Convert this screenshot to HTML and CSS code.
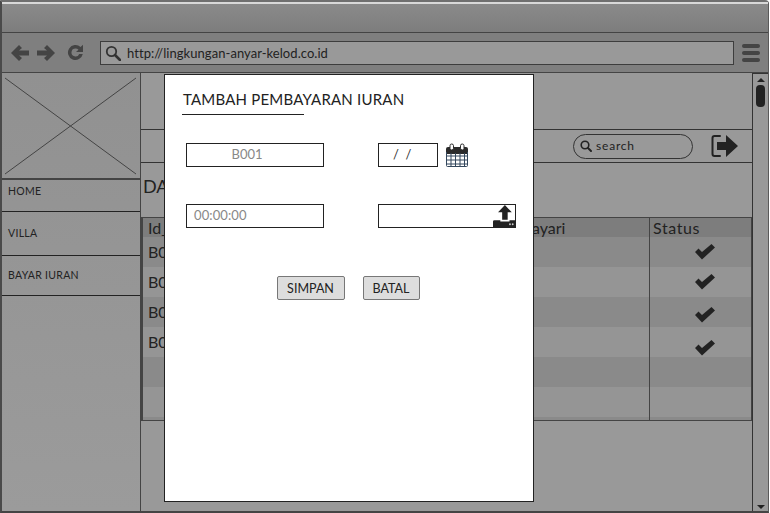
FILE: index.html
```html
<!DOCTYPE html>
<html lang="id">
<head>
    <meta charset="UTF-8">
    <meta name="viewport" content="width=device-width, initial-scale=1.0">
    <title>Tambah Pembayaran Iuran</title>
    <link rel="stylesheet" href="styles.css">
</head>
<body>

    <div class="window">
        <div class="titlebar"></div>

        <div class="toolbar">
            <svg class="nav-icon" width="18" height="16" viewBox="0 0 18 16"><path d="M8 0 0 8l8 8 3-3-3-2.500h10v-5H8l3-2.500z"/></svg>
            <svg class="nav-icon nav-forward" width="18" height="16" viewBox="0 0 18 16"><path d="M10 0l8 8-8 8-3-3 3-2.500H0v-5h10L7 3z"/></svg>
            <svg class="nav-icon reload" width="17" height="17" viewBox="0 0 17 17"><path d="M8.500 4.500a4 4 0 1 0 3.700 5.500h3.600A7.500 7.500 0 1 1 13.600 3L16 .7V8H9l2.500-2.300a4 4 0 0 0-3-1.200z"/></svg>
            <div class="url-box">
                <svg width="16" height="16" viewBox="0 0 16 16"><circle cx="6.500" cy="6.500" r="4.700" fill="none" stroke="#333" stroke-width="1.800"/><path d="M10 10l5 5" stroke="#333" stroke-width="2.600" stroke-linecap="round"/></svg>
                <span>http://lingkungan-anyar-kelod.co.id</span>
            </div>
            <div class="burger"><i></i><i></i><i></i></div>
        </div>

        <div class="main">
            <aside class="sidebar">
                <svg class="logo" viewBox="0 0 138 104" preserveAspectRatio="none"><path d="M3 4 134 100M134 4 3 100" stroke="#444" fill="none"/></svg>
                <nav>
                    <a class="nav-home">HOME</a>
                    <a class="nav-villa">VILLA</a>
                    <a class="nav-bayar">BAYAR IURAN</a>
                </nav>
            </aside>

            <section class="content">
                <div class="banner"></div>
                <div class="topbar">
                    <div class="search">
                        <svg width="12" height="12" viewBox="0 0 12 12"><circle cx="5" cy="5" r="3.800" fill="none" stroke="#222" stroke-width="1.600"/><path d="M8 8l3 3" stroke="#222" stroke-width="2" stroke-linecap="round"/></svg>
                        <span>search</span>
                    </div>
                    <svg class="logout" width="28" height="24" viewBox="0 0 28 24"><path d="M9 2H3.500Q1.500 2 1.500 4v16q0 2 2 2H9" fill="none" stroke="#222" stroke-width="2" stroke-linecap="round"/><path d="M6 8h9V1l12 11-12 11v-7H6z" fill="#222"/></svg>
                </div>
                <h2 class="page-title">DA</h2>

                <div class="data-table">
                    <div class="row head"><div class="cell">Id_</div><div class="cell">ayari</div><div class="cell">Status</div></div>
                    <div class="row"><div class="cell">B001</div><div class="cell"></div><div class="cell cell-check check-1"><svg width="22" height="17" viewBox="0 0 22 17"><path d="M1 9l3.500-3.500 3.500 3.500L17.500 1 21 4.500 8 16.500z"/></svg></div></div>
                    <div class="row"><div class="cell">B002</div><div class="cell"></div><div class="cell cell-check check-2"><svg width="22" height="17" viewBox="0 0 22 17"><path d="M1 9l3.500-3.500 3.500 3.500L17.500 1 21 4.500 8 16.500z"/></svg></div></div>
                    <div class="row"><div class="cell">B003</div><div class="cell"></div><div class="cell cell-check check-3"><svg width="22" height="17" viewBox="0 0 22 17"><path d="M1 9l3.500-3.500 3.500 3.500L17.500 1 21 4.500 8 16.500z"/></svg></div></div>
                    <div class="row"><div class="cell">B004</div><div class="cell"></div><div class="cell cell-check check-4"><svg width="22" height="17" viewBox="0 0 22 17"><path d="M1 9l3.500-3.500 3.500 3.500L17.500 1 21 4.500 8 16.500z"/></svg></div></div>
                    <div class="row"><div class="cell"></div><div class="cell"></div><div class="cell"></div></div>
                    <div class="row"><div class="cell"></div><div class="cell"></div><div class="cell"></div></div>
                    <div class="row row-end"><div class="cell"></div><div class="cell"></div><div class="cell"></div></div>
                </div>
            </section>

            <div class="scrollbar">
                <i class="arrow-up"></i>
                <b class="thumb"></b>
                <i class="arrow-down"></i>
            </div>
        </div>
    </div>

    <div class="modal">
        <h1>TAMBAH PEMBAYARAN IURAN</h1>

        <div class="form-grid">
            <div class="field field-center">B001</div>
            <div class="date-group">
                <div class="field field-date">/&nbsp;&nbsp;/</div>
                <svg width="24" height="25" viewBox="0 0 24 25">
                    <path d="M1 6q0-2 2-2h18q2 0 2 2v5H1z" fill="#2b2b2b"/>
                    <rect x="5" y="1" width="3.500" height="6" rx="1.700" fill="#fff" stroke="#2b2b2b"/>
                    <rect x="15.500" y="1" width="3.500" height="6" rx="1.700" fill="#fff" stroke="#2b2b2b"/>
                    <path d="M1.500 9v13.500q0 1 1 1h19q1 0 1-1V9M1.500 13h21M1.500 17h21M1.500 21h21M6 10v13M10.500 10v13M15 10v13M19.500 10v13" fill="none" stroke="#33475c"/>
                </svg>
            </div>
            <div class="field field-time">00:00:00</div>
            <div class="field field-file">
                <svg width="22" height="22" viewBox="0 0 24 24">
                    <path d="M13 0l7.500 8H16v8H10V8H5.500z" fill="#222"/>
                    <path d="M0 18q0-1.500 1.500-1.500H8v1.500h10v-1.500h6V24H0z" fill="#222"/>
                    <circle cx="18.500" cy="21" r="1" fill="#ccc"/><circle cx="21.500" cy="21" r="1" fill="#ccc"/>
                </svg>
            </div>
        </div>

        <div class="actions">
            <button class="btn btn-save">SIMPAN</button>
            <button class="btn btn-cancel">BATAL</button>
        </div>
    </div>

</body>
</html>
```

FILE: styles.css
```css
* {
    box-sizing: border-box;
}

html, body {
    margin: 0;
    height: 100%;
    overflow: hidden;
}

body {
    font-family: Lato, "Open Sans", sans-serif;
    color: #222;
    background: #fff;
}

.window {
    width: 769px;
    height: 513px;
    display: flex;
    flex-direction: column;
    border-top: 2px solid #6f6f6f;
    border-left: 2px solid #4a4a4a;
    border-right: 1px solid #5a5a5a;
    border-bottom: 2px solid #444;
    background: #999;
    border-top-right-radius: 4px;
}

.titlebar {
    height: 31px;
    flex: none;
    border-top: 2px solid #d8d8d8;
    border-bottom: 1px solid #444;
    background: linear-gradient(#8a8a8a, #7d7d7d);
}

.toolbar {
    height: 40px;
    flex: none;
    display: flex;
    align-items: center;
    padding: 0 8px 0 9px;
    border-bottom: 1px solid #444;
    background: #7f7f7f;
}

.nav-icon {
    fill: #444;
    flex: none;
}

.nav-forward {
    margin-left: 8px;
}

.reload {
    margin: 0 16px 0 12px;
}

.url-box {
    flex: 1;
    height: 24px;
    display: flex;
    align-items: center;
    gap: 6px;
    padding-left: 4px;
    border: 1px solid #3d3d3d;
    background: #999;
    font-size: 13px;
    letter-spacing: 0.05px;
    color: #222;
}

.burger {
    width: 18px;
    margin-left: 8px;
    display: flex;
    flex-direction: column;
    gap: 3px;
}

.burger i {
    height: 4px;
    border-radius: 2px;
    background: #444;
}

.main {
    flex: 1;
    display: flex;
    min-height: 0;
    background: #999;
}

.sidebar {
    width: 139px;
    flex: none;
    border-right: 1px solid #444;
    background: linear-gradient(#919191, #9b9b9b);
}

.logo {
    display: block;
    width: 138px;
    height: 106px;
    border-bottom: 2px solid #444;
    margin-top: 1px;
}

.sidebar nav a {
    display: block;
    padding: 5px 6px 0;
    font-size: 10.500px;
    letter-spacing: 0.3px;
    border-bottom: 1px solid #222;
}

.nav-home {
    height: 32px;
}

.nav-villa {
    height: 44px;
    padding-top: 15px !important;
}

.nav-bayar {
    height: 40px;
    padding-top: 13px !important;
}

.content {
    flex: 1;
    min-width: 0;
    display: flex;
    flex-direction: column;
}

.banner {
    height: 57px;
    border-bottom: 1px solid #333;
}

.topbar {
    height: 33px;
    display: flex;
    align-items: center;
    justify-content: flex-end;
    padding-right: 13px;
    border-bottom: 1px solid #333;
}

.search {
    width: 120px;
    height: 25px;
    display: flex;
    align-items: center;
    gap: 4px;
    padding-left: 6px;
    border: 1px solid #333;
    border-radius: 13px;
    font-size: 12px;
    letter-spacing: 0.8px;
}

.search span {
    margin-bottom: 2px;
}

.logout {
    margin-left: 18px;
}

.page-title {
    height: 54px;
    margin: 0;
    padding: 11px 0 0 2px;
    font-size: 18px;
    font-weight: 400;
    line-height: 24px;
}

.data-table {
    height: 204px;
    overflow: hidden;
    border-top: 1px solid #444;
    border-left: 2px solid #444;
    border-bottom: 1px solid #444;
    border-right: 1px solid #444;
}

.row {
    display: grid;
    grid-template-columns: 389px 117px 103px;
    height: 30px;
    font-size: 16px;
    line-height: 30px;
}

.row:nth-child(even) {
    background: #8a8a8a;
}

.row:nth-child(odd) {
    background: #959595;
}

.row.head {
    height: 19px;
    line-height: 20px;
    background: #7d7d7d;
}

.row-end {
    height: 3px;
}

.cell {
    padding-left: 5px;
    white-space: nowrap;
    overflow: hidden;
}

.cell:nth-child(2) {
    padding-left: 0;
}

.cell:last-child {
    border-left: 1px solid #444;
    padding-left: 3px;
    letter-spacing: 0.6px;
}

.cell-check {
    display: flex;
    justify-content: center;
    align-items: center;
}

.cell:last-child.cell-check {
    padding-left: 8px;
}

.cell-check svg {
    fill: #222;
}

.check-1 { padding-bottom: 2px; }
.check-2 { padding-bottom: 2px; }
.check-3 { padding-top: 5px; }
.check-4 { padding-top: 11px; }

.scrollbar {
    width: 16px;
    flex: none;
    position: relative;
    display: flex;
    flex-direction: column;
    align-items: center;
    border-left: 1px solid #333;
    border-top: 1px solid #333;
    background: #999;
}

.arrow-up, .arrow-down {
    width: 0;
    height: 0;
    border-left: 4px solid transparent;
    border-right: 4px solid transparent;
}

.arrow-up {
    margin-top: 4px;
    border-bottom: 4px solid #222;
}

.thumb {
    width: 9px;
    height: 22px;
    margin-top: 3px;
    border-radius: 4px;
    background: #222;
}

.arrow-down {
    margin-top: auto;
    margin-bottom: 2px;
    border-top: 4px solid #222;
}

/* dialog over the dimmed page */
.modal {
    position: absolute;
    left: 164px;
    top: 74px;
    width: 370px;
    height: 428px;
    padding: 15px 17px 0 17px;
    border: 1px solid #222;
    background: #fff;
}

.modal h1 {
    width: 122px;
    height: 25px;
    margin: 0;
    padding-left: 1px;
    white-space: nowrap;
    font-size: 15px;
    font-weight: 400;
    line-height: 18px;
    letter-spacing: 0.2px;
    border-bottom: 1px solid #222;
}

.form-grid {
    display: grid;
    grid-template-columns: 138px 138px;
    column-gap: 54px;
    row-gap: 36px;
    margin: 28px 0 0 4px;
}

.field {
    height: 24px;
    border: 1px solid #222;
    padding-left: 7px;
    font-size: 13px;
    line-height: 21px;
    color: #888;
}

.field-time {
    letter-spacing: 0.1px;
}

.field-center {
    text-align: center;
    padding: 0 16px 0 0;
}

.date-group {
    display: flex;
    align-items: flex-start;
    gap: 7px;
}

.field-date {
    width: 60px;
    padding-left: 14px;
    color: #333;
}

.field-file {
    display: flex;
    justify-content: flex-end;
    align-items: flex-end;
    padding: 0;
    overflow: hidden;
}

.actions {
    display: flex;
    justify-content: center;
    gap: 18px;
    margin: 48px 0 0 -2px;
}

.btn {
    height: 24px;
    padding: 0;
    border: 1px solid #777;
    border-radius: 2px;
    background: #ddd;
    font-family: inherit;
    font-size: 12.500px;
    color: #222;
}

.btn-save {
    width: 68px;
}

.btn-cancel {
    width: 57px;
}
```
